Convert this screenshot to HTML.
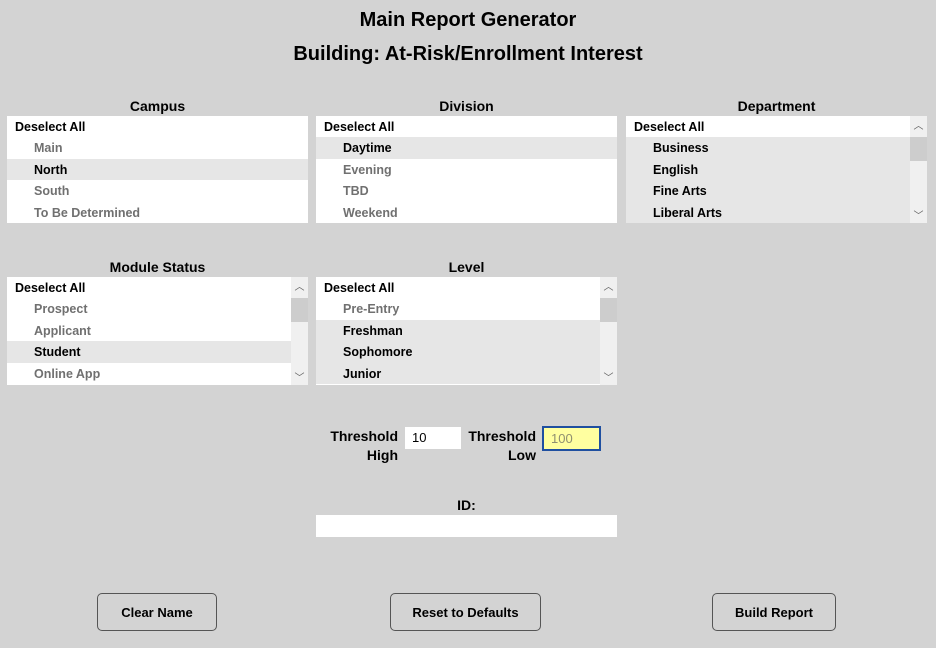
<!DOCTYPE html><html><head><style>
body{margin:0;width:936px;height:648px;background:#d3d3d3;font-family:"Liberation Sans",sans-serif;position:relative;overflow:hidden;color:#000}
.a{position:absolute}
.t{width:936px;text-align:center;font-weight:bold;font-size:20px}
.h{font-weight:bold;font-size:14px;text-align:center;width:301px}
.l{position:absolute;width:301px;height:107px;background:#fff;overflow:hidden}
.r{height:21.4px;line-height:23px;font-size:12.5px;font-weight:bold;padding-left:27px;color:#707070;box-sizing:border-box}
.r.d{padding-left:8px;color:#000}
.r.s{background:#e6e6e6;color:#000}
.sb{position:absolute;right:0;top:0;width:17px;height:107px;background:#f0f0f0}
.th{position:absolute;left:0;top:21px;width:17px;height:24px;background:#cdcdcd}
.sb span{position:absolute;left:0;width:17px;text-align:center;font-size:10px;color:#606060}
.btn{position:absolute;height:36px;border:1px solid #555;border-radius:5px;font-size:13px;font-weight:bold;text-align:center;line-height:37px;box-sizing:content-box}
.lb{font-weight:bold;font-size:14px;text-align:right;line-height:19px}
</style></head><body>
<div class="a t" style="top:9px">Main Report Generator</div>
<div class="a t" style="top:43px">Building: At-Risk/Enrollment Interest</div>

<div class="a h" style="left:7px;top:98px">Campus</div>
<div class="a h" style="left:316px;top:98px">Division</div>
<div class="a h" style="left:626px;top:98px">Department</div>
<div class="l" style="left:7px;top:116px">
<div class="r d">Deselect All</div><div class="r">Main</div><div class="r s">North</div><div class="r">South</div><div class="r">To Be Determined</div></div>
<div class="l" style="left:316px;top:116px">
<div class="r d">Deselect All</div><div class="r s">Daytime</div><div class="r">Evening</div><div class="r">TBD</div><div class="r">Weekend</div></div>
<div class="l" style="left:626px;top:116px">
<div class="r d">Deselect All</div><div class="r s">Business</div><div class="r s">English</div><div class="r s">Fine Arts</div><div class="r s">Liberal Arts</div>
<div class="sb"><span style="top:1px">︿</span><div class="th"></div><span style="bottom:1px">﹀</span></div></div>

<div class="a h" style="left:7px;top:259px">Module Status</div>
<div class="a h" style="left:316px;top:259px">Level</div>
<div class="l" style="left:7px;top:277px;height:108px">
<div class="r d">Deselect All</div><div class="r">Prospect</div><div class="r">Applicant</div><div class="r s">Student</div><div class="r">Online App</div>
<div class="sb" style="height:108px"><span style="top:1px">︿</span><div class="th"></div><span style="bottom:1px">﹀</span></div></div>
<div class="l" style="left:316px;top:277px;height:108px">
<div class="r d">Deselect All</div><div class="r">Pre-Entry</div><div class="r s">Freshman</div><div class="r s">Sophomore</div><div class="r s">Junior</div>
<div class="sb" style="height:108px"><span style="top:1px">︿</span><div class="th"></div><span style="bottom:1px">﹀</span></div></div>

<div class="a lb" style="left:300px;top:427px;width:98px">Threshold<br>High</div>
<div class="a" style="left:405px;top:427px;width:56px;height:22px;background:#fff;font-size:13px;line-height:22px;padding-left:7px;box-sizing:border-box">10</div>
<div class="a lb" style="left:440px;top:427px;width:96px">Threshold<br>Low</div>
<div class="a" style="left:542px;top:426px;width:59px;height:25px;background:#ffffa0;border:2px solid #1f4fa0;font-size:13px;line-height:21px;padding-left:7px;box-sizing:border-box;color:#909070">100</div>
<div class="a" style="left:316px;top:497px;width:301px;text-align:center;font-weight:bold;font-size:14px">ID:</div>
<div class="a" style="left:316px;top:515px;width:301px;height:22px;background:#fff"></div>

<div class="btn" style="left:97px;top:593px;width:118px">Clear Name</div>
<div class="btn" style="left:390px;top:593px;width:149px">Reset to Defaults</div>
<div class="btn" style="left:712px;top:593px;width:122px">Build Report</div>
</body></html>
